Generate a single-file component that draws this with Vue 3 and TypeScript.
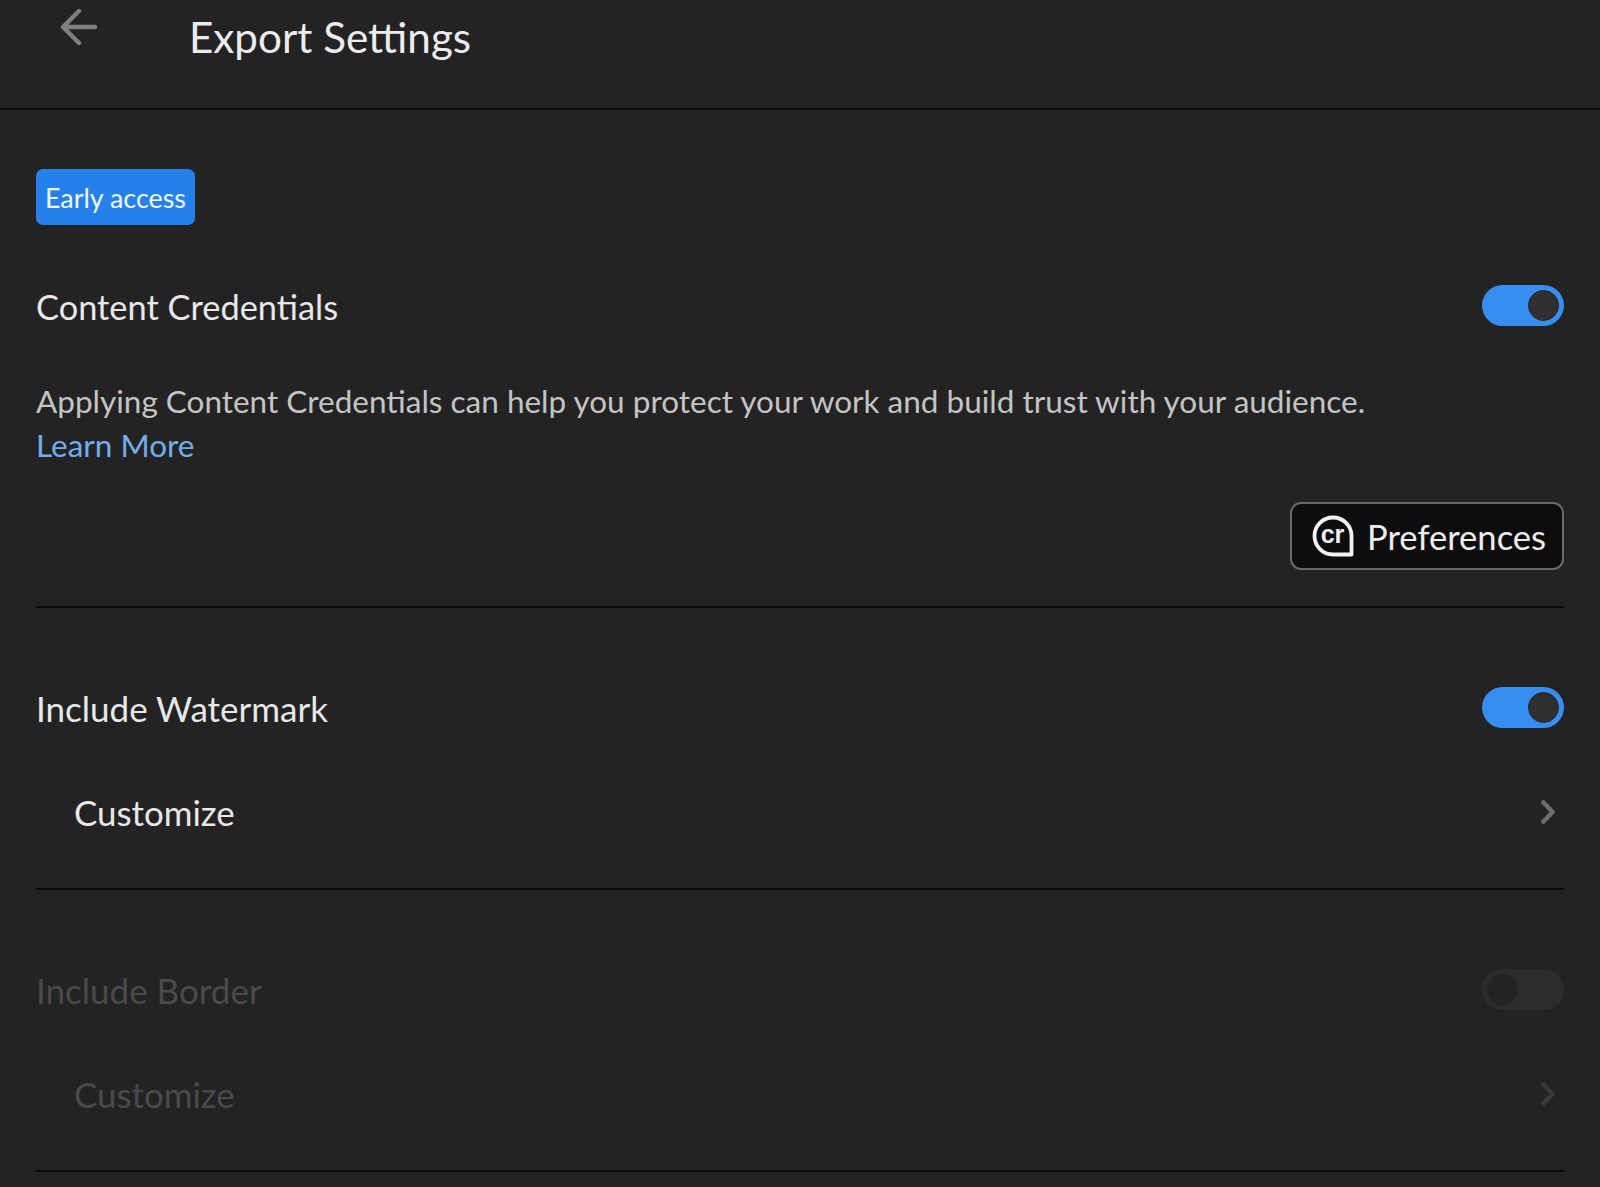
<script setup lang="ts">
const description = 'Applying Content Credentials can help you protect your work and build trust with your audience.'
</script>

<template>
  <div class="page">
    <header class="topbar">
      <button class="back" type="button" aria-label="Back">
        <svg width="38" height="38" viewBox="0 0 38 38" fill="none" stroke="currentColor" stroke-width="4.4" stroke-linecap="round" stroke-linejoin="round">
          <path d="M35 19H3M19 3 3 19l16 16" />
        </svg>
      </button>
      <h1 class="title">Export Settings</h1>
    </header>

    <main class="content">
      <section class="section first">
        <span class="badge">Early access</span>
        <div class="row label-row">
          <span class="label cc">Content Credentials</span>
          <span class="toggle on"><i class="knob"></i></span>
        </div>
        <p class="desc">{{ description }}<br /><a class="link">Learn More</a></p>
        <div class="actions">
          <button class="pref" type="button">
            <svg class="cr" width="42" height="42" viewBox="0 0 42 42">
              <path d="M21 39.5A18.5 18.5 0 1 1 39.5 21V39.5Z" fill="none" stroke="currentColor" stroke-width="3.8" stroke-linejoin="round" />
              <text x="20.5" y="28" text-anchor="middle" class="cr-text">cr</text>
            </svg>
            <span>Preferences</span>
          </button>
        </div>
      </section>

      <section class="section second">
        <div class="row label-row">
          <span class="label">Include Watermark</span>
          <span class="toggle on"><i class="knob"></i></span>
        </div>
        <div class="row sub-row">
          <span class="sub">Customize</span>
          <svg class="chev" width="14" height="24" viewBox="0 0 14 24" fill="none" stroke="currentColor" stroke-width="4.6" stroke-linecap="round" stroke-linejoin="round">
            <path d="M2.5 2.5 11.5 12 2.5 21.5" />
          </svg>
        </div>
      </section>

      <section class="section second disabled">
        <div class="row label-row">
          <span class="label">Include Border</span>
          <span class="toggle off"><i class="knob"></i></span>
        </div>
        <div class="row sub-row">
          <span class="sub">Customize</span>
          <svg class="chev" width="14" height="24" viewBox="0 0 14 24" fill="none" stroke="currentColor" stroke-width="4.6" stroke-linecap="round" stroke-linejoin="round">
            <path d="M2.5 2.5 11.5 12 2.5 21.5" />
          </svg>
        </div>
      </section>
    </main>
  </div>
</template>

<style>
html, body { margin: 0; background: #232323; }
</style>

<style scoped>
.page {
  height: 1187px;
  overflow: hidden;
  background: #232323;
  font-family: "Lato", "Open Sans", sans-serif;
  color: #e8e8e8;
}
.topbar {
  height: 108px;
  border-bottom: 2px solid #0b0b0b;
  display: flex;
  align-items: flex-start;
  box-sizing: content-box;
}
.back {
  margin: 8px 0 0 60px;
  padding: 0;
  width: 38px;
  height: 38px;
  border: 0;
  background: none;
  color: #7f7f7f;
}
.back svg { display: block; }
.title {
  margin: 11px 0 0 91px;
  font-size: 42.2px;
  line-height: 52px;
  font-weight: 400;
  color: #ececec;
}
.content { padding: 0 36px; }
.section { border-bottom: 2px solid #0b0b0b; box-sizing: border-box; }
.first { padding-top: 59px; height: 498px; }
.second { height: 282px; padding-top: 79px; }
.badge {
  display: block;
  width: 159px;
  height: 56px;
  line-height: 57px;
  background: #2680eb;
  border-radius: 7px;
  color: #f0f8ff;
  font-size: 26.9px;
  text-align: center;
}
.row {
  display: flex;
  justify-content: space-between;
  align-items: center;
}
.label-row { height: 41px; }
.first .label-row { margin-top: 60px; }
.label { font-size: 35px; color: #e8e8e8; padding-top: 1px; }
.label.cc { font-size: 34.4px; }
.sub-row { height: 41px; margin-top: 63px; padding: 0 9px 0 38px; }
.sub { font-size: 34.9px; color: #e8e8e8; padding-top: 2px; }
.chev { color: #6e6e6e; }
.toggle {
  display: flex;
  align-items: center;
  width: 82px;
  height: 41px;
  border-radius: 21px;
  box-sizing: border-box;
  padding: 0 5px;
}
.knob {
  display: block;
  width: 31px;
  height: 31px;
  border-radius: 50%;
  box-sizing: border-box;
}
.toggle.on { background: #378ef0; justify-content: flex-end; }
.toggle.on .knob { background: #303030; border: 1px solid #232323; }
.toggle.off { background: #2c2c2c; justify-content: flex-start; }
.toggle.off .knob { background: #232323; }
.desc {
  margin: 53px 0 0;
  font-size: 31.5px;
  line-height: 44px;
  color: #c4c4c4;
}
.link { color: #74aeea; }
.actions {
  display: flex;
  justify-content: flex-end;
  margin-top: 35px;
}
.pref {
  display: flex;
  align-items: center;
  gap: 13px;
  width: 274px;
  height: 68px;
  box-sizing: border-box;
  padding: 0 0 0 20px;
  background: #0d0d0d;
  border: 2px solid #6a6a6a;
  border-radius: 11px;
  color: #ededed;
  font: inherit;
  font-size: 34.6px;
}
.cr { color: #f2f2f2; flex: none; }
.cr-text {
  font-family: "Liberation Sans", sans-serif;
  font-weight: 700;
  font-size: 25px;
  fill: currentColor;
}
.disabled .label, .disabled .sub { color: #4a4a4a; }
.disabled .chev { color: #3a3a3a; }
</style>
